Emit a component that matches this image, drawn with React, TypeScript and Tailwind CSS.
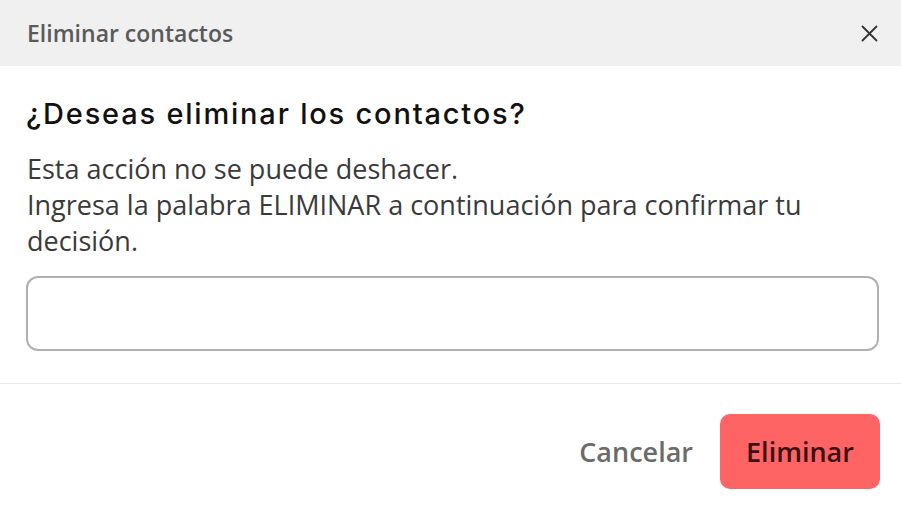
import React from "react";

export default function App() {
  return (
    <div className="w-[901px] h-[509px] bg-white flex flex-col" style={{ fontFamily: '"Open Sans", sans-serif' }}>
      <div className="h-[66px] bg-[#f0f0f0] flex items-center justify-between pl-[27px] pr-[23px] shrink-0">
        <span className="text-[23px] font-semibold text-[#5a5a5a] leading-none">Eliminar contactos</span>
        <svg width="17" height="17" viewBox="0 0 17 17" fill="none" stroke="#333" strokeWidth="1.8" strokeLinecap="round">
          <path d="M1.5 1.5 L15.5 15.5 M15.5 1.5 L1.5 15.5" />
        </svg>
      </div>
      <div className="pl-[26px] pr-[22px] pt-[30px] pb-[32px] flex flex-col border-b border-[#e8e8e8]">
        <h2 className="text-[29px] font-medium text-[#111] leading-[36px] tracking-[1.8px]" style={{ fontFamily: 'Inter, sans-serif' }}>
          ¿Deseas eliminar los contactos?
        </h2>
        <p className="mt-[19px] text-[27px] leading-[36px] text-[#3a3a3a] pl-[1px] pr-[60px]">
          Esta acción no se puede deshacer.
          <br />
          Ingresa la palabra ELIMINAR a continuación para confirmar tu decisión.
        </p>
        <input className="mt-[17px] h-[75px] w-full rounded-[12px] border-2 border-[#b0b0b0] outline-none" />
      </div>
      <div className="flex-1 flex items-start justify-end pt-[30px] pr-[21px] gap-[27px]">
        <button className="h-[75px] pt-[2px] text-[27px] font-semibold text-[#6b6b6b]">Cancelar</button>
        <button className="w-[160px] h-[75px] pt-[2px] rounded-[10px] bg-[#ff6464] text-[27px] font-semibold text-[#3b1012]">Eliminar</button>
      </div>
    </div>
  );
}
